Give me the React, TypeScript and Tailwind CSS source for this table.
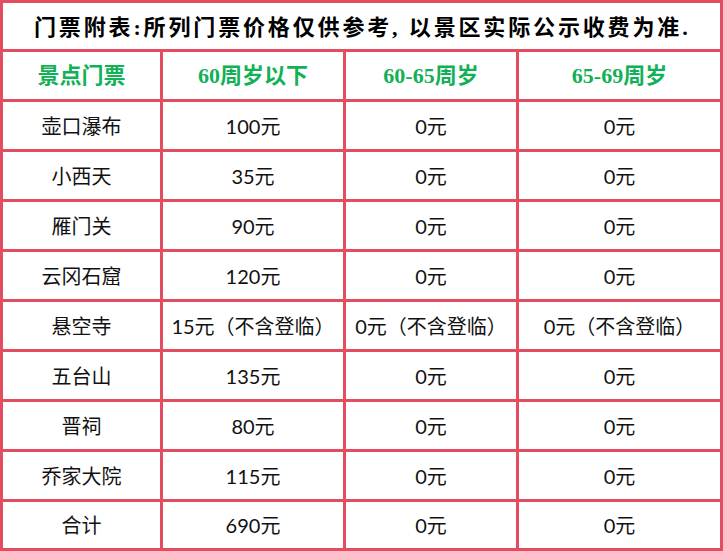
import React from "react";

const rows: [string, string, string, string][] = [
  ["壶口瀑布", "100元", "0元", "0元"],
  ["小西天", "35元", "0元", "0元"],
  ["雁门关", "90元", "0元", "0元"],
  ["云冈石窟", "120元", "0元", "0元"],
  ["悬空寺", "15元（不含登临）", "0元（不含登临）", "0元（不含登临）"],
  ["五台山", "135元", "0元", "0元"],
  ["晋祠", "80元", "0元", "0元"],
  ["乔家大院", "115元", "0元", "0元"],
  ["合计", "690元", "0元", "0元"],
];

const headers = ["景点门票", "60周岁以下", "60-65周岁", "65-69周岁"];

export default function App() {
  return (
    <div className="w-[723px] h-[551px] bg-white">
      <div className="grid grid-cols-[157px_180px_170px_201px] gap-[3px] p-[3px] bg-[#e34d5f] w-[723px]">
        <div className="col-span-4 h-[46px] bg-white flex items-center pl-[31px] pt-[2px] text-[22px] font-bold text-black tracking-[2.85px] whitespace-nowrap font-['Liberation_Serif','Noto_Sans_CJK_SC',serif]">
          门票附表:所列门票价格仅供参考, 以景区实际公示收费为准.
        </div>
        {headers.map((h) => (
          <div
            key={h}
            className="h-[47px] bg-white flex items-center justify-center text-[22px] font-bold text-[#12b057] whitespace-nowrap font-['Liberation_Serif','Noto_Sans_CJK_SC',serif]"
          >
            {h}
          </div>
        ))}
        {rows.map((r, i) =>
          r.map((c, j) => (
            <div
              key={`${i}-${j}`}
              className={
                i === rows.length - 1
                  ? "h-[46px] bg-white flex items-center justify-center text-[20px] text-[#111] whitespace-nowrap font-['Lato','Noto_Sans_CJK_SC',sans-serif]"
                  : "h-[47px] bg-white flex items-center justify-center text-[20px] text-[#111] whitespace-nowrap font-['Lato','Noto_Sans_CJK_SC',sans-serif]"
              }
            >
              {c}
            </div>
          ))
        )}
      </div>
    </div>
  );
}
